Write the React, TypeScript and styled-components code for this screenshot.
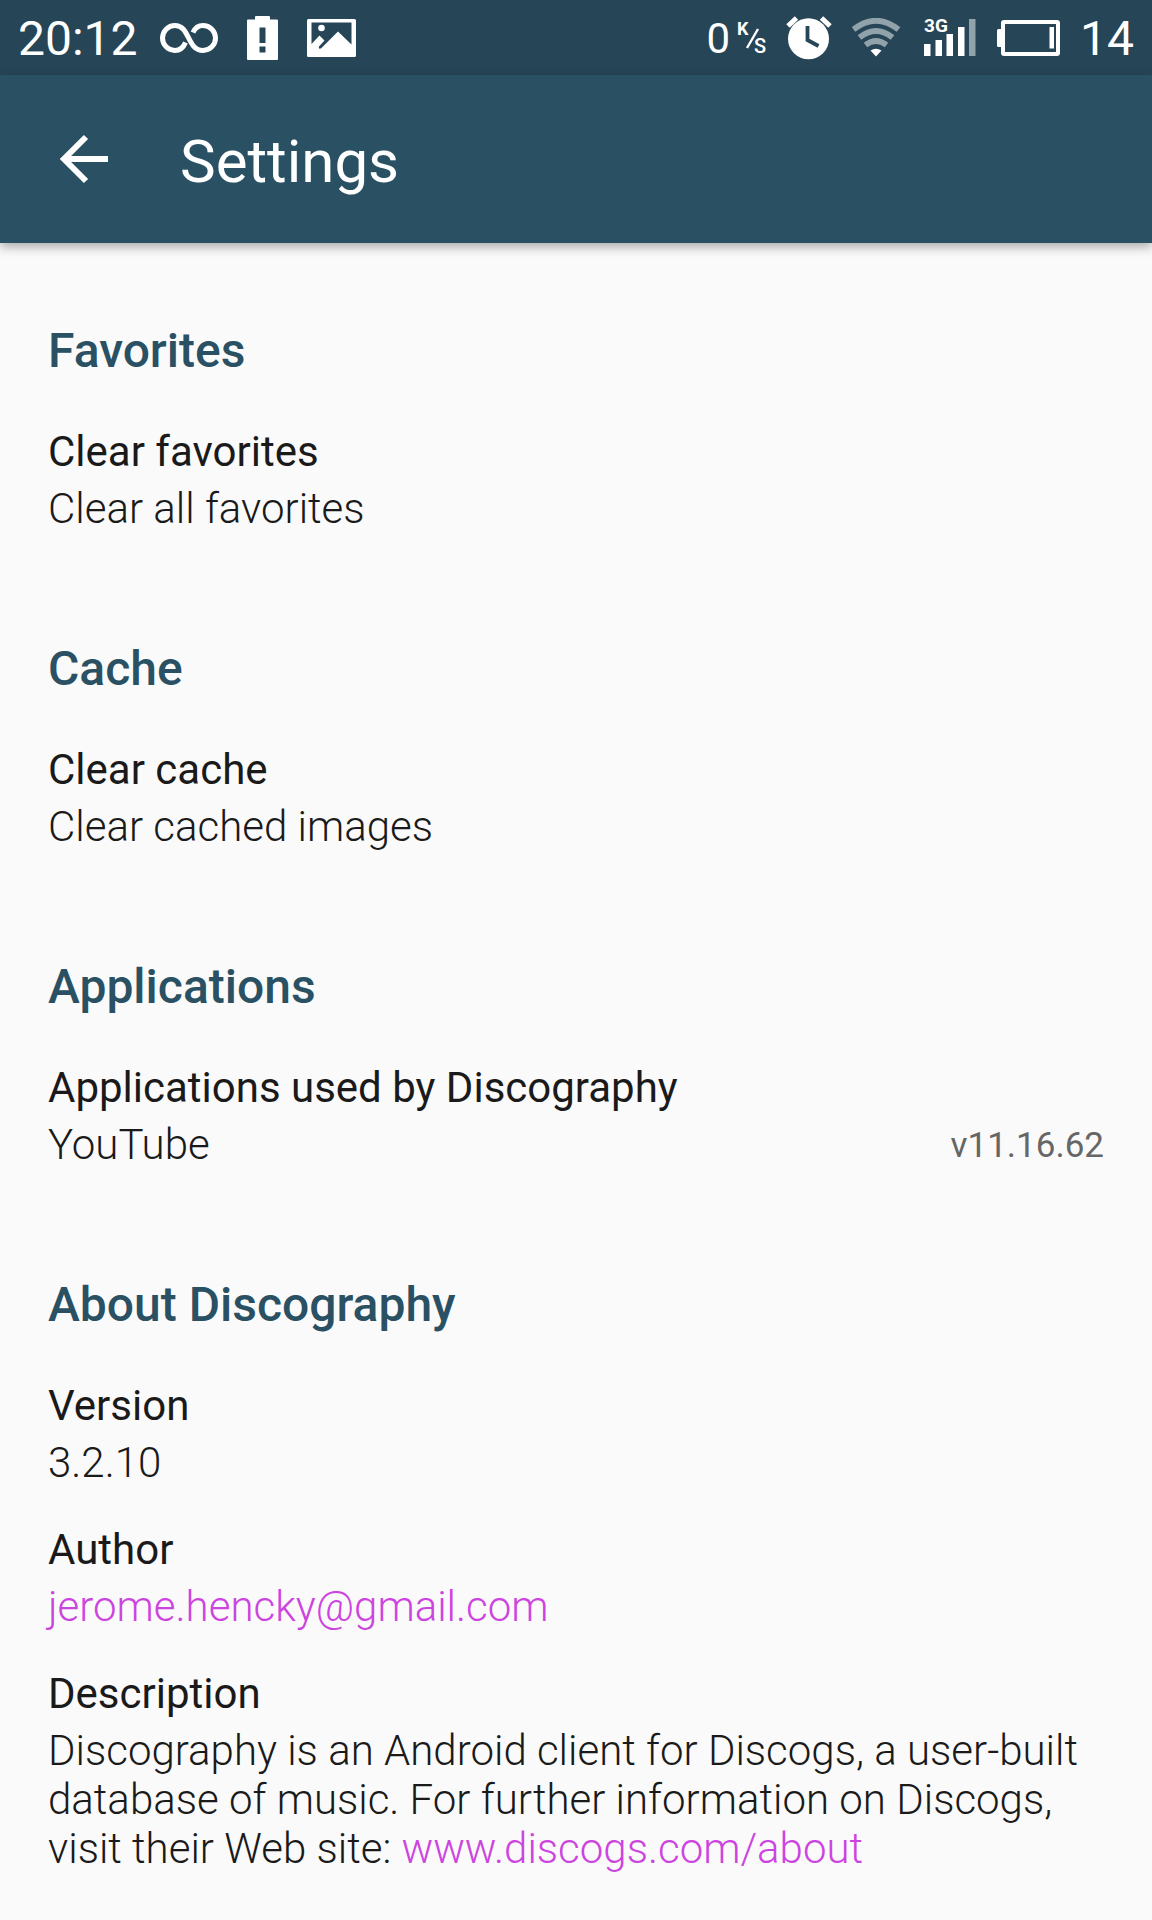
import React from "react";
import styled, { createGlobalStyle } from "styled-components";

const GlobalStyle = createGlobalStyle`
  *, *::before, *::after { box-sizing: border-box; }
  body {
    margin: 0;
    background: #fafafa;
    color: #1a1a1a;
    font-family: Roboto, "Noto Sans", sans-serif;
  }
  h1, h2, h3, p { margin: 0; }
`;

const StatusBar = styled.div`
  display: flex;
  justify-content: space-between;
  height: 75px;
  padding: 0 18px;
  background: #264557;
  color: #fff;
`;

const StatusGroup = styled.div<{ $gap: number }>`
  display: flex;
  align-items: center;
  gap: ${(p) => p.$gap}px;
`;

const StatusText = styled.span<{ $size: number }>`
  padding-top: 2px;
  font-size: ${(p) => p.$size}px;
  line-height: 56px;
`;

const StatusIcon = styled.svg`
  display: block;
  flex: none;
`;

const AppBar = styled.header`
  display: flex;
  align-items: center;
  gap: 48px;
  height: 168px;
  padding: 0 48px;
  background: #2a5163;
  color: #fff;
  box-shadow: 0 4px 10px rgba(0, 0, 0, 0.32);
`;

const BackButton = styled.button`
  display: flex;
  padding: 0;
  border: 0;
  background: none;
  color: inherit;
  cursor: pointer;
`;

const Title = styled.h1`
  padding: 6px 10px 0;
  font-size: 60px;
  font-weight: 400;
  line-height: 70px;
`;

const Content = styled.main`
  display: flex;
  flex-direction: column;
  gap: 108px;
  padding: 80px 48px 44px;
`;

const Section = styled.section`
  display: flex;
  flex-direction: column;
  gap: 38px;
`;

const SectionTitle = styled.h2`
  padding-bottom: 10px;
  color: #2a5163;
  font-size: 48px;
  font-weight: 500;
  line-height: 56px;
`;

const Item = styled.div`
  display: flex;
  flex-direction: column;
  gap: 8px;
`;

const ItemTitle = styled.h3`
  font-size: 42px;
  font-weight: 400;
  line-height: 49px;
`;

const ItemText = styled.p`
  font-size: 42px;
  font-weight: 300;
  line-height: 49px;
`;

const ItemAction = styled.button`
  display: flex;
  flex-direction: column;
  gap: 8px;
  padding: 0;
  border: 0;
  background: none;
  color: inherit;
  font: inherit;
  text-align: left;
  cursor: pointer;
`;

const Split = styled.div`
  display: flex;
  justify-content: space-between;
  align-items: center;
`;

const AppVersion = styled.span`
  padding-top: 2px;
  color: #666;
  font-size: 35px;
  line-height: 47px;
`;

const Link = styled.a`
  color: #cc44e0;
  text-decoration: none;
`;

const InfinityIcon = () => (
  <StatusIcon width="58" height="32" viewBox="0 0 58 32" fill="none" stroke="#fff" strokeWidth="5">
    <path d="M25.5 20.5C23 26.5 19 28.5 15 28.5A12.5 12.5 0 1 1 15 3.5C30 3.5 27 28.5 43 28.5A12.5 12.5 0 1 0 43 3.5C39 3.5 35 6 33 10.5" />
  </StatusIcon>
);

const BatteryAlertIcon = () => (
  <StatusIcon width="31" height="44" viewBox="0 0 31 44" fill="#fff">
    <path
      fillRule="evenodd"
      d="M8 1Q8 0 9 0H22Q23 0 23 1V3.5H30Q31 3.5 31 4.5V43Q31 44 30 44H1Q0 44 0 43V4.5Q0 3.5 1 3.5H8ZM12.5 11.5V27H18.5V11.5ZM12.5 30.5V36.5H18.5V30.5Z"
    />
  </StatusIcon>
);

const PictureIcon = () => (
  <StatusIcon width="49" height="38" viewBox="0 0 49 38">
    <path
      fill="#fff"
      fillRule="evenodd"
      d="M1.5 0H47.5Q49 0 49 1.5V36.5Q49 38 47.5 38H1.5Q0 38 0 36.5V1.5Q0 0 1.5 0ZM4.5 3.5V25L12.5 16.5L17.5 21.5L11.8 27.8Q11.5 30.5 14.2 29.3L31 12.5L44.5 25.5V3.5Z"
    />
    <circle cx="14.5" cy="9" r="3.3" fill="#fff" />
  </StatusIcon>
);

const AlarmIcon = () => (
  <StatusIcon width="46" height="44" viewBox="0 0 46 44" fill="none">
    <circle cx="22.5" cy="22.8" r="20.5" fill="#fff" />
    <path d="M2 10L10.5 2M44 10L35.5 2" stroke="#fff" strokeWidth="5" />
    <path d="M21.5 10V24L32.5 30" stroke="#264557" strokeWidth="3.8" />
  </StatusIcon>
);

const WifiIcon = () => (
  <StatusIcon width="52" height="39" viewBox="0 0 52 39" fill="none">
    <g stroke="#92a2ab" strokeWidth="5.8">
      <path d="M1.5 11.5Q24 -6 46.5 11.5" />
      <path d="M7.5 19.5Q24 6.500 40.5 19.5" />
      <path d="M13.5 27Q24 19 34.5 27" />
    </g>
    <path d="M18.5 32.5Q24 29 29.5 32.5L24 38.5Z" fill="#fff" />
  </StatusIcon>
);

const SignalIcon = () => (
  <StatusIcon width="52" height="48" viewBox="0 -2 52 48" fill="#fff">
    <text x="0" y="16" fontFamily="Roboto, sans-serif" fontSize="19" fontWeight="700">
      3G
    </text>
    <rect y="28" width="6.5" height="12" />
    <rect x="11.5" y="24" width="6.5" height="16" />
    <rect x="22.5" y="18" width="6.5" height="22" />
    <rect x="34" y="11" width="6.5" height="29" />
    <rect x="45" y="3" width="6.5" height="37" fill="#92a2ab" />
  </StatusIcon>
);

const BatteryIcon = () => (
  <StatusIcon width="64" height="36" viewBox="-1 0 64 36">
    <rect x="6" y="2" width="55" height="32" rx="1" fill="none" stroke="#fff" strokeWidth="4" />
    <rect x="0" y="9" width="6" height="18" rx="1.5" fill="#fff" />
    <rect x="52.5" y="7" width="4.5" height="21.5" fill="#fff" />
  </StatusIcon>
);

const RateIcon = () => (
  <StatusIcon width="36" height="44" viewBox="0 0 36 44" fill="#fff" fontFamily="Roboto, sans-serif">
    <text x="7" y="19" fontSize="18" fontWeight="700">K</text>
    <path d="M28 13L17 32" stroke="#fff" strokeWidth="2.4" />
    <text x="24" y="37" fontSize="20" fontWeight="500">S</text>
  </StatusIcon>
);

const ArrowIcon = () => (
  <svg width="74" height="50" viewBox="2 0 74 50" fill="none" stroke="#fff" strokeWidth="6">
    <path d="M62 25H18M40 3L18 25L40 47" />
  </svg>
);

export default function App() {
  return (
    <>
      <GlobalStyle />
      <StatusBar>
        <StatusGroup $gap={22}>
          <StatusText $size={48}>20:12</StatusText>
          <StatusGroup $gap={29}>
            <InfinityIcon />
            <BatteryAlertIcon />
            <PictureIcon />
          </StatusGroup>
        </StatusGroup>
        <StatusGroup $gap={20}>
          <StatusGroup $gap={0}>
            <StatusText $size={42}>0</StatusText>
            <RateIcon />
          </StatusGroup>
          <AlarmIcon />
          <WifiIcon />
          <SignalIcon />
          <BatteryIcon />
          <StatusText $size={48}>14</StatusText>
        </StatusGroup>
      </StatusBar>
      <AppBar>
        <BackButton aria-label="Back">
          <ArrowIcon />
        </BackButton>
        <Title>Settings</Title>
      </AppBar>
      <Content>
        <Section>
          <SectionTitle>Favorites</SectionTitle>
          <ItemAction>
            <ItemTitle as="span">Clear favorites</ItemTitle>
            <ItemText as="span">Clear all favorites</ItemText>
          </ItemAction>
        </Section>
        <Section>
          <SectionTitle>Cache</SectionTitle>
          <ItemAction>
            <ItemTitle as="span">Clear cache</ItemTitle>
            <ItemText as="span">Clear cached images</ItemText>
          </ItemAction>
        </Section>
        <Section>
          <SectionTitle>Applications</SectionTitle>
          <Item>
            <ItemTitle>Applications used by Discography</ItemTitle>
            <Split>
              <ItemText>YouTube</ItemText>
              <AppVersion>v11.16.62</AppVersion>
            </Split>
          </Item>
        </Section>
        <Section>
          <SectionTitle>About Discography</SectionTitle>
          <Item>
            <ItemTitle>Version</ItemTitle>
            <ItemText>3.2.10</ItemText>
          </Item>
          <Item>
            <ItemTitle>Author</ItemTitle>
            <ItemText>
              <Link href="mailto:jerome.hencky@gmail.com">jerome.hencky@gmail.com</Link>
            </ItemText>
          </Item>
          <Item>
            <ItemTitle>Description</ItemTitle>
            <ItemText>
              Discography is an Android client for Discogs, a user-built database of music. For
              further information on Discogs, visit their Web site:{" "}
              <Link href="http://www.discogs.com/about">www.discogs.com/about</Link>
            </ItemText>
          </Item>
        </Section>
      </Content>
    </>
  );
}
